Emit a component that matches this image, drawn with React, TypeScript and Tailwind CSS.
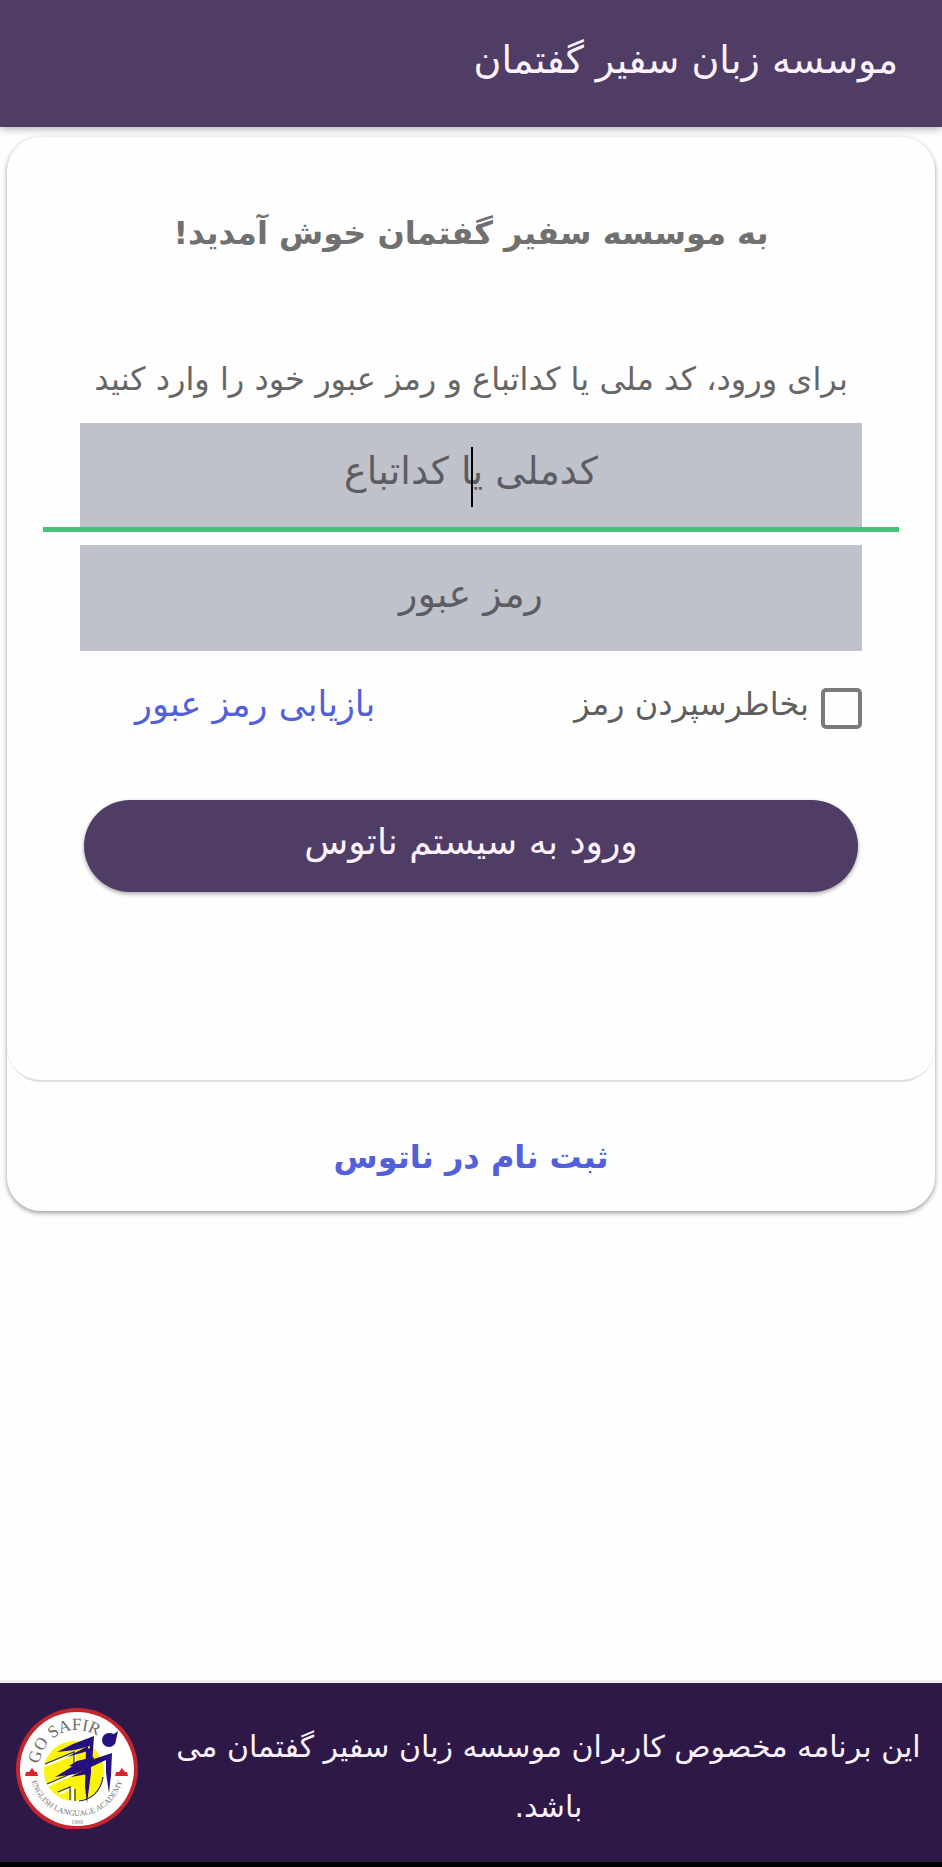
import React, { useState } from "react";

function SafirLogo() {
  return (
    <svg viewBox="0 0 124 122" direction="ltr" className="w-[124px] h-[122px] shrink-0" role="img" aria-label="Go Safir">
      <defs>
        <path id="logo-top" d="M24 60 A38 38 0 0 1 100 62" />
        <path id="logo-bottom" d="M15 62 A47 47 0 0 0 109 62" />
      </defs>
      <circle cx="62" cy="62" r="61" fill="#c4262e" />
      <circle cx="62" cy="62" r="57" fill="#fefefe" />
      <circle cx="59" cy="64" r="30" fill="#fbf30c" />
      <g fill="none" stroke="#fefefe" strokeWidth="2">
        <path d="M30 59 L59 47 M32 79 L59 67 M44 87 L57 81 M60 46 V62 M58 80 V94" />
      </g>
      <g fill="none" stroke="#33302c" strokeWidth="1.2">
        <path d="M30 57 L59 45 V63 M32 77 L60 65 M43 85 L55 80 V93 M60 82 V94 M64 94 C76 93 86 84 88 70" />
      </g>
      <g fill="#25107d">
        {/* runner: two swept wings joined by the body stroke */}
        <path d="M42 45 L58 37 L79 29 L77 58 L74 58 L75 39 L60 43 Z" />
        <path d="M52 50 L73 39 L73 44 Z" />
        <path d="M40 70 L58 59 L97 46 L96 68 L94 86 L91 66 L91 53 L76 60 L60 67 Z" />
        <path d="M54 59 L62 54 L79 50 L77 57 L62 60 Z" />
        <path d="M71 42 L76 41 L76 66 L72 96 L70 80 Z" />
        <path d="M56 70 L72 61 L73 67 Z" />
        <circle cx="94" cy="33" r="7" />
        <path d="M95 26 L99 27 L103 24 L101 33 Z" />
      </g>
      <g fill="#d9232a">
        <path d="M10 69 L11 65 L14 65 L17 61 L20 65 L22 65 L23 69 Z" />
        <path d="M100 69 L101 65 L104 65 L107 61 L110 65 L112 65 L113 69 Z" />
      </g>
      <text fill="#6b6b6b" className="font-['Liberation_Serif'] text-[17px]">
        <textPath href="#logo-top" startOffset="3">GO SAFIR</textPath>
      </text>
      <text fill="#777777" className="font-['Liberation_Serif'] text-[8px]" textAnchor="middle">
        <textPath href="#logo-bottom" startOffset="50%">ENGLISH LANGUAGE ACADEMY</textPath>
      </text>
      <text x="62" y="117" fill="#8a8a8a" className="font-['Liberation_Serif'] text-[6px]" textAnchor="middle">
        1990
      </text>
    </svg>
  );
}

export default function App() {
  const [remember, setRemember] = useState(false);

  return (
    <div dir="rtl" lang="fa" className="min-h-screen flex flex-col bg-[#fefefe] font-['DejaVu_Sans',sans-serif]">
      <header className="relative h-[127px] flex items-center bg-[#4f3d66] px-11 pb-2 shadow-[0_2px_8px_rgba(0,0,0,0.3)]">
        <h1 className="text-[38px] leading-[48px] text-[#fdf3ff]">موسسه زبان سفیر گفتمان</h1>
      </header>

      <main className="mx-[7px] mt-[10px] rounded-[34px] bg-[#fefefe] shadow-[0_2px_5px_rgba(0,0,0,0.4)]">
        <form
          className="rounded-[34px] border-b-2 border-[#dedede] px-9 pt-[68px] pb-[188px]"
          onSubmit={(e) => e.preventDefault()}
        >
          <h2 className="text-center text-[32px] leading-[56px] font-bold text-[#707070]">
            به موسسه سفیر گفتمان خوش آمدید!
          </h2>
          <p className="mt-[90px] mb-4 text-center text-[32px] leading-[56px] whitespace-nowrap text-[#666666]">
            برای ورود، کد ملی یا کداتباع و رمز عبور خود را وارد کنید
          </p>

          <div className="relative border-b-[5px] border-[#45c17c] px-[37px]">
            <input
              type="text"
              aria-label="کدملی یا کداتباع"
              placeholder="کدملی یا کداتباع"
              className="block w-full h-[104px] pb-2 bg-[#bfc2ca] text-center text-[38px] leading-[72px] text-[#5c5d62] placeholder:text-[#5c5d62] outline-none"
            />
            <span className="absolute left-1/2 top-6 h-[60px] w-[2px] bg-black" />
          </div>
          <div className="mt-[13px] px-[37px]">
            <input
              type="password"
              aria-label="رمز عبور"
              placeholder="رمز عبور"
              className="block w-full h-[106px] pb-2 bg-[#bfc2ca] text-center text-[38px] leading-[72px] text-[#5c5d62] placeholder:text-[#5c5d62] outline-none"
            />
          </div>

          <div className="mt-[25px] flex items-center justify-between pr-[37px] pl-[92px] leading-[56px]">
            <label className="flex items-center gap-3 text-[32px] text-[#5e5e5e]">
              <input
                type="checkbox"
                checked={remember}
                onChange={(e) => setRemember(e.target.checked)}
                className="size-[41px] appearance-none rounded-[5px] border-4 border-[#7b7b7b] checked:bg-[#45c17c]"
              />
              <span className="pb-2">بخاطرسپردن رمز</span>
            </label>
            <a href="#recover" className="pb-2 text-[35px] text-[#5260dc]">
              بازیابی رمز عبور
            </a>
          </div>

          <div className="mt-[60px] px-[41px]">
            <button
              type="submit"
              className="h-[92px] w-full rounded-full bg-[#4f3d66] pb-2 text-[36px] text-[#fdf3ff] shadow-[0_2px_4px_rgba(0,0,0,0.35)]"
            >
              ورود به سیستم ناتوس
            </button>
          </div>
        </form>

        <div className="flex h-[129px] items-center justify-center">
          <a href="#register" className="pt-5 text-[32px] leading-[56px] font-bold text-[#5260dc]">
            ثبت نام در ناتوس
          </a>
        </div>
      </main>

      <footer className="mt-auto flex items-start gap-8 border-t-[3px] border-b-[5px] border-t-[#eeeeee] border-b-black bg-[#2d1848] pt-6 pr-4 pb-[33px] pl-[15px]">
        <p className="grow pt-[10px] -mb-2 text-center text-[30px] leading-[60px] text-[#fdf3ff]">
          این برنامه مخصوص کاربران موسسه زبان سفیر گفتمان می باشد.
        </p>
        <SafirLogo />
      </footer>
    </div>
  );
}
